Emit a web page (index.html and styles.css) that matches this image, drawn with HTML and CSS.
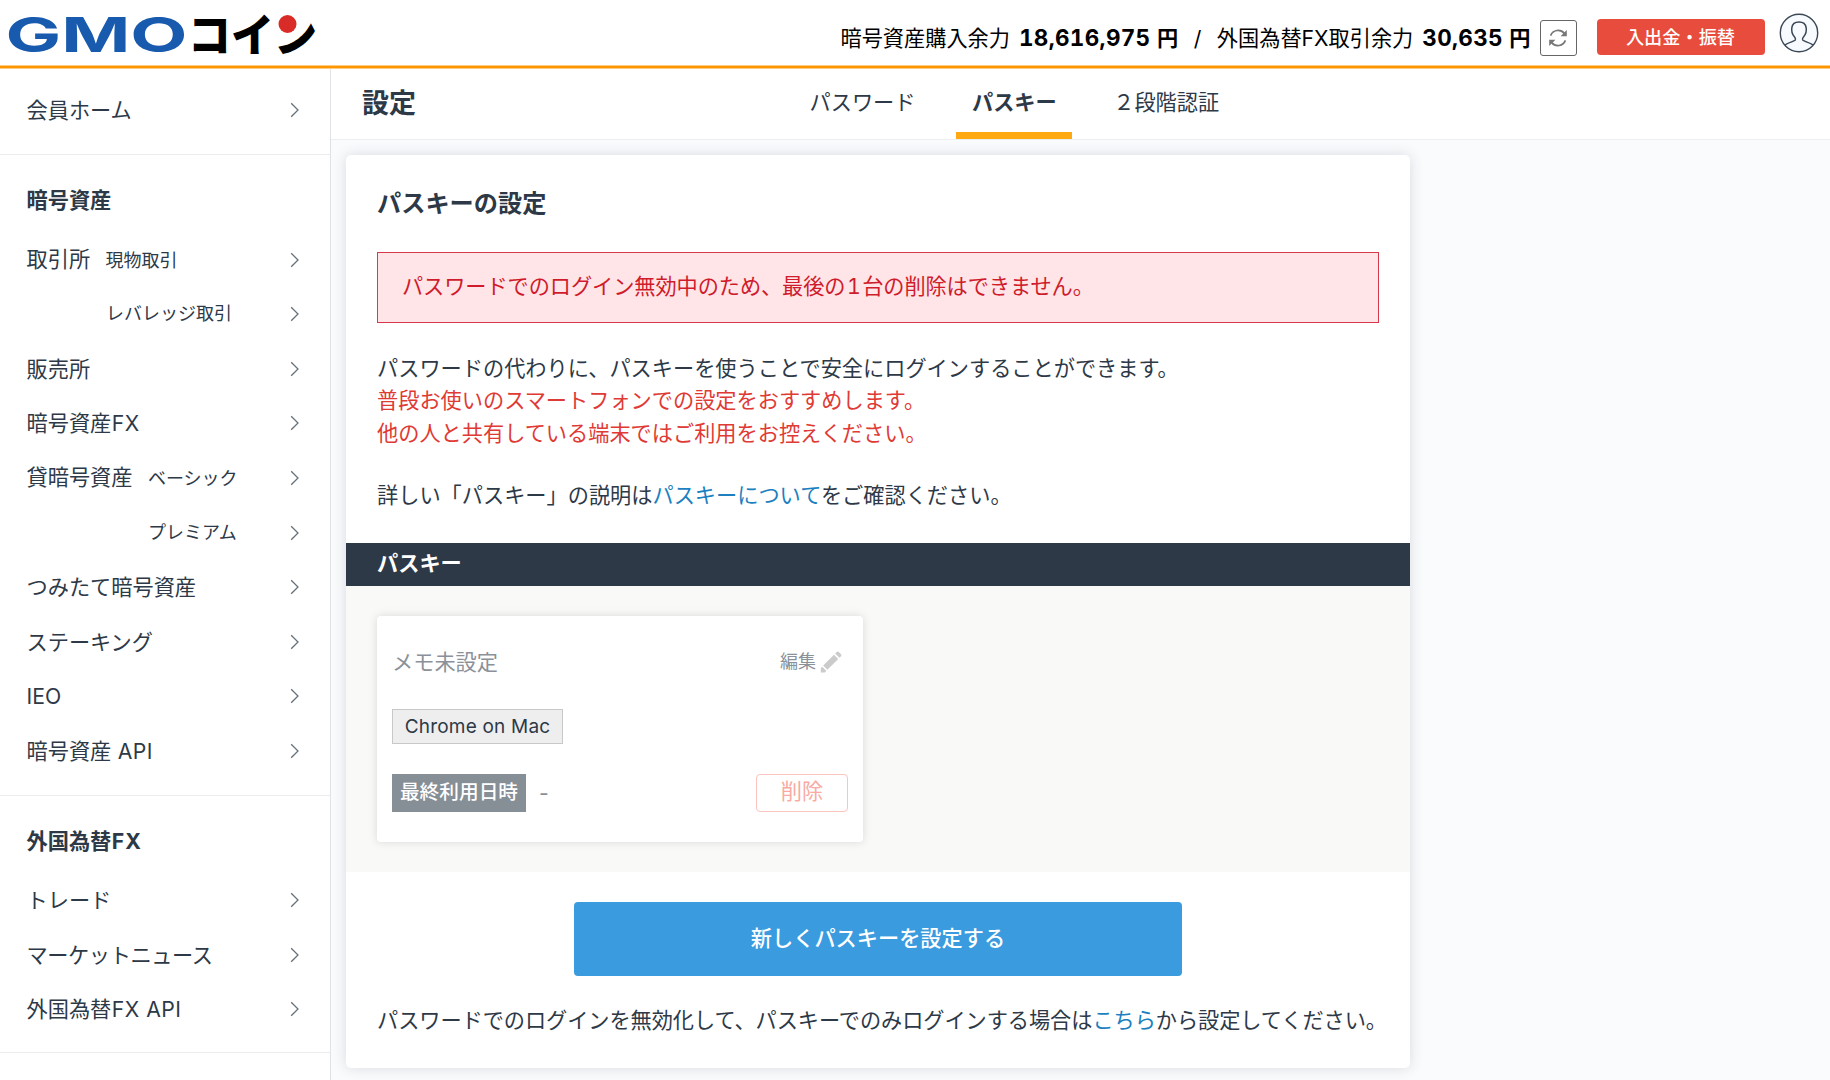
FILE: index.html
```html
<!DOCTYPE html>
<html lang="ja">
<head>
<meta charset="utf-8">
<title>設定 | GMOコイン</title>
<link rel="stylesheet" href="styles.css">
</head>
<body>
<svg width="0" height="0" class="defs"><defs>
  <symbol id="chev" viewBox="0 0 10 16"><path d="M1.2 1.2 L8 8 L1.2 14.8" fill="none" stroke="#66707b" stroke-width="1.3"/></symbol>
</defs></svg>
<header class="header">
  <svg class="logo" width="330" height="66" viewBox="0 0 330 66">
    <text class="logo-gmo" x="5.5" y="51.5" textLength="182" lengthAdjust="spacingAndGlyphs">GMO</text>
    <text class="logo-coin" x="188" y="52" textLength="129" lengthAdjust="spacingAndGlyphs">コイン</text>
    <circle cx="287.5" cy="24" r="9" fill="#d92b27"/>
  </svg>
  <div class="balance">
    <span class="bl-label">暗号資産購入余力</span><b class="num n1">18,616,975</b><b class="yen">円</b>
    <span class="slash">/</span>
    <span class="bl-label">外国為替FX取引余力</span><b class="num n2">30,635</b><b class="yen">円</b>
  </div>
  <button class="refresh"><svg width="20" height="20" viewBox="0 0 20 20"><g fill="none" stroke="#777" stroke-width="1.7"><path d="M2.6 7.6 A8 8 0 0 1 16.3 5.4"/><path d="M17.4 12.4 A8 8 0 0 1 3.7 14.6"/></g><path d="M18.8 2v6.2h-6.2z M1.2 18v-6.2h6.2z" fill="#777"/></svg></button>
  <button class="deposit">入出金・振替</button>
  <svg class="avatar" width="40" height="40" viewBox="0 0 40 40"><circle cx="20" cy="20" r="18.7" fill="#f7fbff" stroke="#3c4855" stroke-width="1.4"/><path d="M6 32.3 C8 29.5 15.5 28.8 16.4 26.8 C16.8 25.6 16.3 24.6 15.2 23.4 C12.8 20.8 12.4 18 12.8 14.8 C13.3 11 16.1 9 20 9 C23.9 9 26.7 11 27.2 14.8 C27.6 18 27.2 20.8 24.8 23.4 C23.7 24.6 23.2 25.6 23.6 26.8 C24.5 28.8 32 29.5 34 32.3" fill="none" stroke="#3c4855" stroke-width="1.5"/></svg>
</header>
<div class="body">
  <nav class="side">
    <section class="home"><a class="row"><span>会員ホーム</span><svg class="chev"><use href="#chev"/></svg></a></section>
    <section>
      <h3>暗号資産</h3>
      <a class="row"><span>取引所<small>現物取引</small></span><svg class="chev"><use href="#chev"/></svg></a>
      <a class="row"><small class="in1">レバレッジ取引</small><svg class="chev"><use href="#chev"/></svg></a>
      <a class="row"><span>販売所</span><svg class="chev"><use href="#chev"/></svg></a>
      <a class="row"><span>暗号資産<span class="api">FX</span></span><svg class="chev"><use href="#chev"/></svg></a>
      <a class="row"><span>貸暗号資産<small>ベーシック</small></span><svg class="chev"><use href="#chev"/></svg></a>
      <a class="row"><small class="in2">プレミアム</small><svg class="chev"><use href="#chev"/></svg></a>
      <a class="row"><span>つみたて暗号資産</span><svg class="chev"><use href="#chev"/></svg></a>
      <a class="row"><span>ステーキング</span><svg class="chev"><use href="#chev"/></svg></a>
      <a class="row"><span>IEO</span><svg class="chev"><use href="#chev"/></svg></a>
      <a class="row"><span>暗号資産 <span class="api">API</span></span><svg class="chev"><use href="#chev"/></svg></a>
    </section>
    <section>
      <h3>外国為替<span class="fx-title">FX</span></h3>
      <a class="row"><span>トレード</span><svg class="chev"><use href="#chev"/></svg></a>
      <a class="row"><span class="news">マーケットニュース</span><svg class="chev"><use href="#chev"/></svg></a>
      <a class="row"><span>外国為替<span class="api">FX API</span></span><svg class="chev"><use href="#chev"/></svg></a>
    </section>
  </nav>
  <main class="main">
    <div class="subhead">
      <h1>設定</h1>
      <div class="tabs"><a class="tab">パスワード</a><a class="tab active">パスキー</a><a class="tab">２段階認証</a></div>
    </div>
    <div class="card">
      <h2>パスキーの設定</h2>
      <div class="alert">パスワードでのログイン無効中のため、最後の<span class="one">1</span>台の削除はできません。</div>
      <p class="intro">パスワードの代わりに、パスキーを使うことで安全にログインすることができます。<br><span class="warn">普段お使いのスマートフォンでの設定をおすすめします。<br>他の人と共有している端末ではご利用をお控えください。</span></p>
      <p class="detail">詳しい「パスキー」の説明は<a class="link">パスキーについて</a>をご確認ください。</p>
      <div class="bar">パスキー</div>
      <div class="list">
        <div class="key">
          <div class="key-top"><span class="memo">メモ未設定</span><span class="edit">編集<svg width="22" height="22" viewBox="0 0 22 22"><path fill="#cbcbcb" d="M14 3.8l4.2 4.2L7.4 18.8 3.2 14.6z M15.2 2.6l1.6-1.6q1-1 2 0l2.2 2.2q1 1 0 2l-1.6 1.6z M2.2 15.8l4 4L5 21.4H.8v-4.2z"/></svg></span></div>
          <span class="chip">Chrome on Mac</span>
          <div class="key-bottom"><span class="label">最終利用日時</span><span class="dash">-</span><button class="delete">削除</button></div>
        </div>
      </div>
      <button class="primary">新しくパスキーを設定する</button>
      <p class="foot">パスワードでのログインを無効化して、パスキーでのみログインする場合は<a class="link">こちら</a>から設定してください。</p>
    </div>
  </main>
</div>
</body>
</html>
```
FILE: styles.css
```css
* { box-sizing: border-box; }
body {
  margin: 0;
  height: 1080px;
  overflow: hidden;
  display: flex;
  flex-direction: column;
  background: #fff;
  color: #2d3947;
  font: 21.2px/32px Inter, "Noto Sans CJK JP", sans-serif;
}
h1, h2, h3, p { margin: 0; }
button { font: inherit; padding: 0; display: flex; align-items: center; justify-content: center; }
.defs { display: none; }

.header {
  height: 69px;
  flex: none;
  display: flex;
  align-items: flex-start;
  color: #000;
  background: linear-gradient(#ffcb82 0 1px, #ff9800 1px 3px, #ffcb82 3px) bottom / 100% 4px no-repeat #fff;
}
.logo { flex: none; overflow: visible; }
.logo-gmo { font: 700 48px Inter, sans-serif; fill: #185aae; }
.logo-coin { font: 900 45px "Noto Sans CJK JP", sans-serif; fill: #000; }
.balance { display: flex; align-items: center; margin: 22px 0 0 auto; height: 32px; white-space: nowrap; }
.num { font-size: 22.5px; margin: 0 6px 0 9px; font-weight: 700; font-variant-numeric: tabular-nums; }
.n1 { width: 132px; letter-spacing: .3px; }
.n2 { width: 81px; letter-spacing: .3px; }
.slash { margin: 0 15.5px; }
.refresh { width: 37px; height: 36px; margin: 20px 0 0 9px; background: #fff; border: 1px solid #666; border-radius: 3px; flex: none; }
.deposit { width: 168px; height: 36px; margin: 19px 0 0 20px; background: #e84c3d; color: #fff; border: 0; border-radius: 4px; font-size: 18.2px; font-weight: 500; flex: none; }
.avatar { margin: 13px 11.5px 0 14px; flex: none; }

.body { flex: 1; display: flex; min-height: 0; }
.side { width: 331px; flex: none; border-right: 1px solid #dfe2e6; }
.side section { border-bottom: 1px solid #ececec; padding: 30px 32px 16px 26.5px; height: 640.5px; }
.side section + section + section { height: 257px; }
.side .home { height: 86px; padding-top: 14px; }
.side h3 { font-size: 21.2px; font-weight: 700; line-height: 31px; margin-bottom: 16.3px; }
.row { display: flex; align-items: center; justify-content: space-between; height: 54.6px; white-space: nowrap; }
.row small { font-size: 18px; margin-left: 15.5px; }
.row .in1 { margin-left: 79.5px; }
.row .in2 { margin-left: 121.5px; }
.api { letter-spacing: .5px; margin-left: .5px; }
.fx-title { letter-spacing: 1px; margin-left: .5px; }
.news { letter-spacing: -.4px; }
.chev { width: 10px; height: 16px; margin-right: -2px; }

.main { flex: 1; background: #fafbfd; min-width: 0; }
.subhead { height: 71px; background: #fff; border-bottom: 1px solid #eceef0; display: flex; padding-left: 31px; }
h1 { font-size: 27px; line-height: 69px; width: 432px; font-weight: 700; }
.tabs { display: flex; gap: 25.5px; }
.tab { padding: 0 15.5px; line-height: 66px; height: 70px; }
.tab.active { font-weight: 700; border-bottom: 7px solid #ffa912; }

.card { width: 1064px; height: 912.5px; margin: 15px 0 0 15px; background: #fff; border-radius: 5px; box-shadow: 0 0 14px rgba(40, 50, 65, .16); overflow: hidden; }
h2 { font-size: 24.2px; line-height: 36px; padding: 31px 31px 0; font-weight: 700; }
.alert { margin: 30px 31px 0; height: 71px; line-height: 67px; padding-left: 24px; border: 1px solid #d63a4a; background: #ffe5e8; color: #cf1b2b; letter-spacing: -.07px; }
.one { font-variant-numeric: tabular-nums; margin: 0 1.5px; }
p { padding: 0 31px; white-space: nowrap; }
.intro { margin-top: 29px; line-height: 32.3px; }
.warn { color: #e03a35; }
.detail { margin-top: 30.5px; }
.link { color: #1b7fc0; }
.bar { margin-top: 31.5px; height: 43px; line-height: 40px; padding-left: 31px; background: #2d3947; color: #fff; font-weight: 700; }
.list { height: 286px; padding: 30px 31px; background: #f9f9f8; }
.key { width: 486px; height: 226px; background: #fff; border-radius: 4px; box-shadow: 0 0 10px rgba(0, 0, 0, .13); padding: 29px 15px 30px; }
.key-top { display: flex; justify-content: space-between; align-items: center; height: 34px; color: #8a9199; }
.edit { font-size: 18px; display: flex; align-items: center; gap: 4px; margin-right: 6px; }
.chip { display: block; width: 171px; height: 35px; margin-top: 30px; border: 1px solid #c8c8c8; background: #eee; font-size: 19px; letter-spacing: .2px; line-height: 34px; text-align: center; }
.key-bottom { display: flex; margin-top: 30px; height: 38px; }
.label { width: 134px; background: #868e96; color: #fff; font-size: 19.7px; font-weight: 500; line-height: 36px; text-align: center; }
.dash { margin-left: 13px; line-height: 38px; color: #868e96; }
.delete { width: 92px; height: 38px; margin-left: auto; padding-bottom: 4px; border: 1.5px solid #fbc4bf; border-radius: 4px; background: #fff; color: #f8aaa3; }
.primary { width: 608px; height: 74px; margin: 30px auto 0; padding-bottom: 2px; border: 0; border-radius: 4px; background: #3a9bde; color: #fff; font-weight: 500; }
.foot { margin-top: 28px; letter-spacing: -.06px; }
```
